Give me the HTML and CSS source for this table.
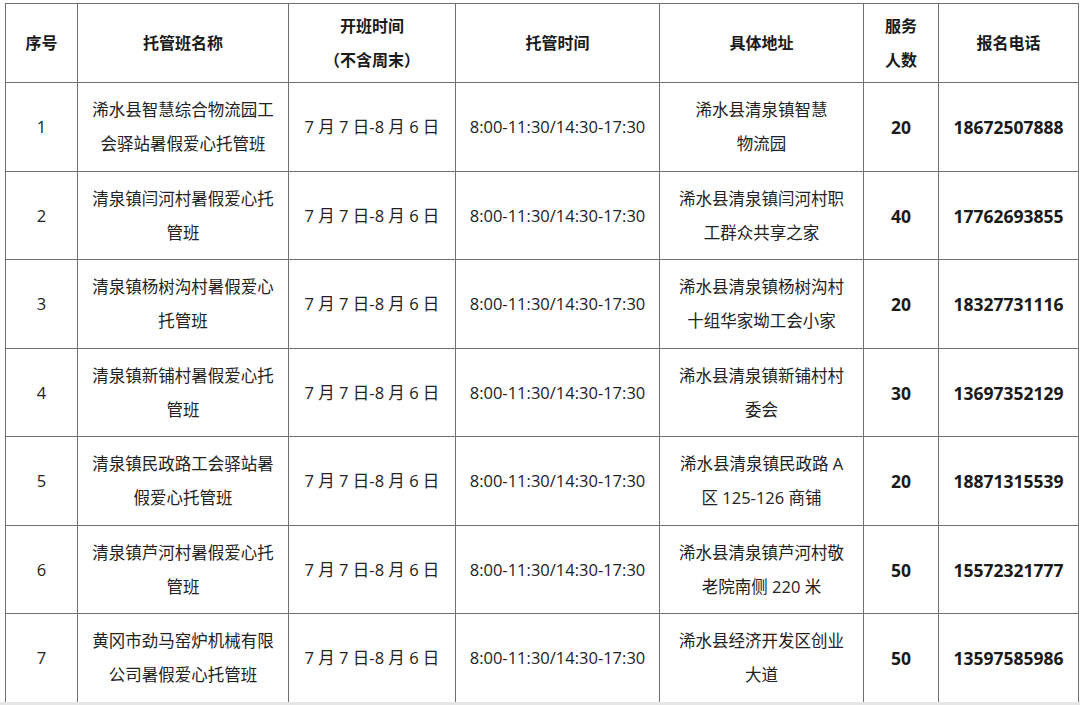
FILE: index.html
```html
<!DOCTYPE html>
<html lang="zh-CN">
<head>
<meta charset="utf-8">
<title>托管班</title>
<link rel="stylesheet" href="styles.css">
</head>
<body>
<div class="page">
<table class="grid">
  <colgroup>
    <col class="c1"><col class="c2"><col class="c3"><col class="c4"><col class="c5"><col class="c6"><col class="c7">
  </colgroup>
  <thead>
    <tr class="head">
      <th>序号</th>
      <th>托管班名称</th>
      <th>开班时间<br>（不含周末）</th>
      <th>托管时间</th>
      <th>具体地址</th>
      <th>服务<br>人数</th>
      <th>报名电话</th>
    </tr>
  </thead>
  <tbody>
    <tr class="r89">
      <td>1</td>
      <td>浠水县智慧综合物流园工<br>会驿站暑假爱心托管班</td>
      <td>7 月 7 日-8 月 6 日</td>
      <td>8:00-11:30/14:30-17:30</td>
      <td>浠水县清泉镇智慧<br>物流园</td>
      <td class="b">20</td>
      <td class="b">18672507888</td>
    </tr>
    <tr class="r88">
      <td>2</td>
      <td>清泉镇闫河村暑假爱心托<br>管班</td>
      <td>7 月 7 日-8 月 6 日</td>
      <td>8:00-11:30/14:30-17:30</td>
      <td>浠水县清泉镇闫河村职<br>工群众共享之家</td>
      <td class="b">40</td>
      <td class="b">17762693855</td>
    </tr>
    <tr class="r89">
      <td>3</td>
      <td>清泉镇杨树沟村暑假爱心<br>托管班</td>
      <td>7 月 7 日-8 月 6 日</td>
      <td>8:00-11:30/14:30-17:30</td>
      <td>浠水县清泉镇杨树沟村<br>十组华家坳工会小家</td>
      <td class="b">20</td>
      <td class="b">18327731116</td>
    </tr>
    <tr class="r88">
      <td>4</td>
      <td>清泉镇新铺村暑假爱心托<br>管班</td>
      <td>7 月 7 日-8 月 6 日</td>
      <td>8:00-11:30/14:30-17:30</td>
      <td>浠水县清泉镇新铺村村<br>委会</td>
      <td class="b">30</td>
      <td class="b">13697352129</td>
    </tr>
    <tr class="r89">
      <td>5</td>
      <td>清泉镇民政路工会驿站暑<br>假爱心托管班</td>
      <td>7 月 7 日-8 月 6 日</td>
      <td>8:00-11:30/14:30-17:30</td>
      <td>浠水县清泉镇民政路 A<br>区 125-126 商铺</td>
      <td class="b">20</td>
      <td class="b">18871315539</td>
    </tr>
    <tr class="r88">
      <td>6</td>
      <td>清泉镇芦河村暑假爱心托<br>管班</td>
      <td>7 月 7 日-8 月 6 日</td>
      <td>8:00-11:30/14:30-17:30</td>
      <td>浠水县清泉镇芦河村敬<br>老院南侧 220 米</td>
      <td class="b">50</td>
      <td class="b">15572321777</td>
    </tr>
    <tr class="r89">
      <td>7</td>
      <td>黄冈市劲马窑炉机械有限<br>公司暑假爱心托管班</td>
      <td>7 月 7 日-8 月 6 日</td>
      <td>8:00-11:30/14:30-17:30</td>
      <td>浠水县经济开发区创业<br>大道</td>
      <td class="b">50</td>
      <td class="b">13597585986</td>
    </tr>
  </tbody>
</table>
</div>
</body>
</html>
```
FILE: styles.css
```css
html, body {
  margin: 0;
  padding: 0;
  background: #ffffff;
}
.page {
  padding: 3px 0 0 5px;
  height: 705px;
  box-sizing: border-box;
  border-bottom: 3px solid #e6e6e6;
  overflow: hidden;
}
.grid {
  border-collapse: collapse;
  table-layout: fixed;
  width: 1073px;
  font-family: "Open Sans", "Noto Sans CJK SC", sans-serif;
  font-size: 16.5px;
  line-height: 34px;
  color: #222222;
}
.c1 { width: 72px; }
.c2 { width: 211px; }
.c3 { width: 167px; }
.c4 { width: 204px; }
.c5 { width: 204px; }
.c6 { width: 75px; }
.c7 { width: 140px; }
.grid th, .grid td {
  border: 1px solid #707070;
  text-align: center;
  vertical-align: middle;
  padding: 0;
  white-space: nowrap;
}
.grid th {
  font-size: 16px;
  font-weight: 700;
  color: #1a1a1a;
}
.head { height: 79px; }
.r89 { height: 89px; }
.r88 { height: 88px; }
.grid td.b {
  font-size: 17.5px;
  font-weight: 700;
  color: #1a1a1a;
}
```
